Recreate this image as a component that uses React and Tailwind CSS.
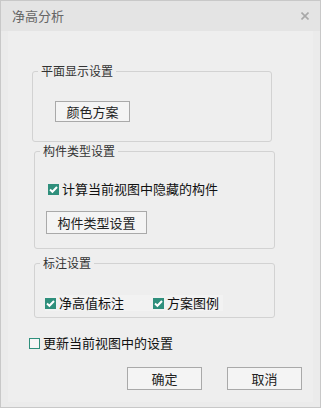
import React from "react";

const font = { fontFamily: '"Noto Sans CJK SC", "Noto Sans", sans-serif' };

const Check = ({ checked }) =>
    checked ? (
        <span className="w-[11px] h-[11px] bg-[#2f8f7c] flex items-center justify-center shrink-0">
            <svg width="11" height="11" viewBox="0 0 11 11">
                <path d="M2 5.6 L4.4 7.8 L9 3" stroke="#fff" strokeWidth="2" fill="none" />
            </svg>
        </span>
    ) : (
        <span className="w-[11px] h-[11px] border border-[#2f8f7c] bg-[#f6f6f6] shrink-0" />
    );

const CheckRow = ({ checked, label, className = "" }) => (
    <div className={`flex items-center gap-[3px] h-[16px] ${className}`}>
        <Check checked={checked} />
        <span className="text-[13px] leading-[16px] text-[#111]">{label}</span>
    </div>
);

const Btn = ({ children, className = "" }) => (
    <button
        className={`border border-[#a9a9a9] bg-[#f4f4f4] text-[13px] leading-none text-[#222] flex items-center justify-center ${className}`}
    >
        {children}
    </button>
);

const Group = ({ title, className = "", children }) => (
    <fieldset className={`border border-[#d2d2d2] rounded-[3px] ${className}`}>
        <legend className="ml-[5px] px-[3px] text-[12px] leading-[16px] text-[#333]">{title}</legend>
        {children}
    </fieldset>
);

export default function App() {
    return (
        <div className="w-[321px] h-[408px] border border-[#c8c8c8] bg-[#ebebeb] flex flex-col" style={font}>
            <div className="h-[30px] bg-[#e4e4e4] flex items-center justify-between pl-[11px] pr-[11px] shrink-0">
                <span className="text-[13px] text-[#666]">净高分析</span>
                <svg width="8" height="8" viewBox="0 0 8 8">
                    <path d="M0.5 0.5 L7.5 7.5 M7.5 0.5 L0.5 7.5" stroke="#a8a8a8" strokeWidth="1.6" />
                </svg>
            </div>
            <div className="flex-1 px-[7px] pb-[5px] flex">
                <div className="flex-1 bg-[#eeeeee] flex flex-col">
                    <Group title="平面显示设置" className="ml-[24px] mt-[32px] w-[240px] h-[79px]">
                        <Btn className="ml-[22px] mt-[22px] w-[75px] h-[21px]">颜色方案</Btn>
                    </Group>
                    <Group title="构件类型设置" className="ml-[26px] mt-[1px] w-[241px] h-[106px]">
                        <CheckRow checked label="计算当前视图中隐藏的构件" className="ml-[13px] mt-[22px]" />
                        <Btn className="ml-[11px] mt-[14px] w-[101px] h-[23px]">构件类型设置</Btn>
                    </Group>
                    <Group title="标注设置" className="ml-[26px] mt-[6px] w-[241px] h-[63px]">
                        <div className="flex mt-[24px] ml-[10px]">
                            <CheckRow checked label="净高值标注" className="bg-[#f2f2f2] pr-[4px] w-[108px]" />
                            <CheckRow checked label="方案图例" className="bg-[#f2f2f2] pr-[4px]" />
                        </div>
                    </Group>
                    <CheckRow label="更新当前视图中的设置" className="ml-[21px] mt-[17px]" />
                    <div className="flex justify-end gap-[25px] mr-[11px] mt-[16px]">
                        <Btn className="w-[75px] h-[23px]">确定</Btn>
                        <Btn className="w-[75px] h-[23px]">取消</Btn>
                    </div>
                </div>
            </div>
        </div>
    );
}
